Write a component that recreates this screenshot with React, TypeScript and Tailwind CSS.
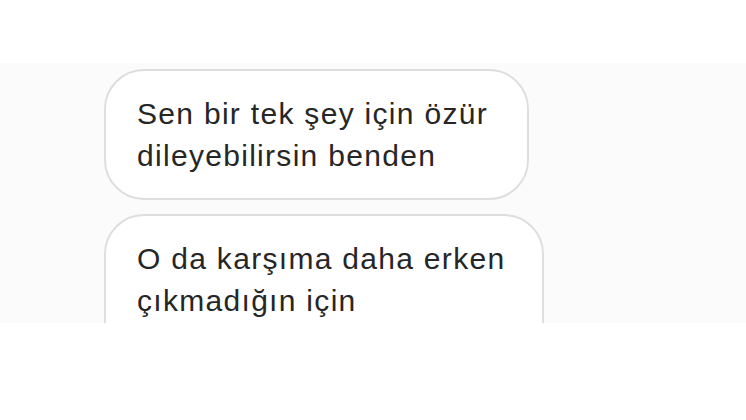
export default function App() {
  return (
    <div className="w-[746px] h-[420px] bg-white overflow-hidden" style={{ fontFamily: '"Liberation Sans", Arial, sans-serif' }}>
      <div className="mt-[63px] h-[260px] bg-[#fbfbfb] overflow-hidden pl-[104px] pt-[6px]">
        <div className="flex flex-col gap-[14px] items-start">
          <div className="w-[425px] rounded-[40px] border-2 border-[#dedede] bg-white pl-[31px] pr-[10px] pt-[22px] pb-[21px] text-[30px] leading-[42px] tracking-[1.3px] text-[#262626] whitespace-nowrap">
            <div>Sen bir tek şey için özür</div>
            <div>dileyebilirsin benden</div>
          </div>
          <div className="w-[440px] h-[160px] rounded-[40px] border-2 border-[#dedede] bg-white pl-[31px] pr-[10px] pt-[22px] text-[30px] leading-[42px] tracking-[1.3px] text-[#262626] whitespace-nowrap">
            <div>O da karşıma daha erken</div>
            <div>çıkmadığın için</div>
          </div>
        </div>
      </div>
    </div>
  );
}
